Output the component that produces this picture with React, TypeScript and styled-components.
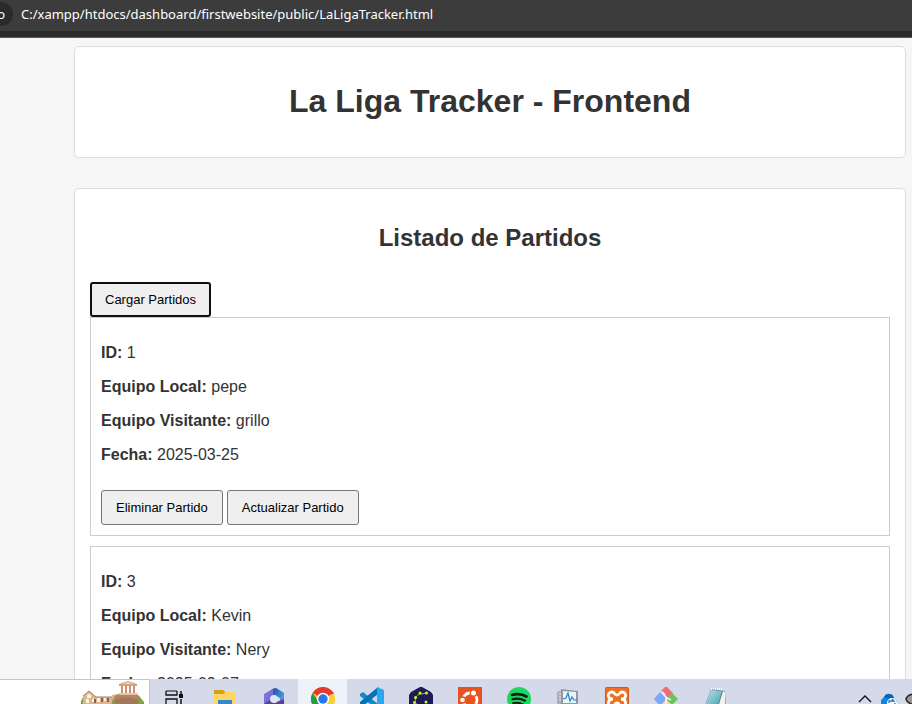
import React from "react";
import styled, { createGlobalStyle } from "styled-components";

const Global = createGlobalStyle`
  * { box-sizing: border-box; }
  body { margin: 0; background: #f6f6f6; color: #333; font-family: "Liberation Sans", Arial, sans-serif; }
  svg { flex: none; }
`;

const Screen = styled.div`
  display: flex;
  flex-direction: column;
  height: 100vh;
  overflow: hidden;
`;

const AddressBar = styled.header`
  flex: none;
  display: flex;
  align-items: flex-start;
  gap: 8px;
  height: 38px;
  padding-top: 2px;
  background: linear-gradient(#3c3c3c 31px, #2b2b2b 31px, #2b2b2b 37px, #5a5a5a 37px);
  color: #fff;
  font-family: "Noto Sans", "Open Sans", sans-serif;
  font-size: 13px;
`;

const SiteChip = styled.button`
  display: flex;
  justify-content: flex-end;
  align-items: center;
  width: 13px;
  height: 24px;
  padding: 0 8px 0 0;
  border: 0;
  border-radius: 0 12px 12px 0;
  background: #2a2a2a;
  color: #fff;
  font: inherit;
`;

const UrlInput = styled.input`
  flex: 1;
  min-width: 0;
  height: 24px;
  padding: 0;
  border: 0;
  outline: 0;
  background: transparent;
  color: #fff;
  font: inherit;
`;

const Viewport = styled.main`
  flex: 1;
  min-height: 0;
  overflow: hidden;
  padding: 8px 6px 0 74px;
`;

const Card = styled.section`
  margin-bottom: 30px;
  padding: 15px;
  border: 1px solid #ddd;
  border-radius: 5px;
  background: #fff;
`;

const Title = styled.h1`
  margin: 21px 0 23px;
  font-size: 32px;
  line-height: 36px;
  text-align: center;
`;

const Subtitle = styled.h2`
  margin: 20px 0 30px;
  font-size: 24px;
  line-height: 28px;
  text-align: center;
`;

const Button = styled.button<{ $focused?: boolean }>`
  display: block;
  height: 35px;
  padding: 0 ${(p) => (p.$focused ? 13 : 14)}px;
  border: ${(p) => (p.$focused ? "2px solid #101010" : "1px solid #767676")};
  border-radius: 3px;
  background: #efefef;
  color: #000;
  font-family: inherit;
  font-size: 13px;
  white-space: nowrap;
`;

const Match = styled.article`
  margin-bottom: 10px;
  padding: 10px;
  border: 1px solid #ccc;
`;

const Field = styled.p`
  margin: 16px 0;
  font-size: 16px;
  line-height: 18px;
`;

const Actions = styled.div`
  display: flex;
  gap: 4px;
  padding-top: 10px;
`;

const Taskbar = styled.footer`
  flex: none;
  display: flex;
  height: 25px;
  overflow: hidden;
  background: #d4daea;
`;

const SearchBox = styled.button`
  display: flex;
  justify-content: flex-end;
  align-items: flex-start;
  width: 150px;
  height: 40px;
  padding: 1px 3px 0 0;
  border: solid #c3c6cd;
  border-width: 1px 1px 0 0;
  background: #fff;
`;

const TaskButton = styled.button<{ $active?: boolean; $wide?: boolean }>`
  flex: none;
  display: flex;
  justify-content: center;
  align-items: flex-start;
  width: ${(p) => (p.$wide ? 50 : 49)}px;
  height: 40px;
  padding: 8px 0 0;
  border: 0;
  background: ${(p) => (p.$active ? "#edf1f9" : "transparent")};
`;

const Tray = styled.div`
  display: flex;
  gap: 8px;
  margin-left: auto;
`;

const TrayButton = styled.button<{ $edge?: boolean }>`
  display: flex;
  align-items: flex-start;
  width: ${(p) => (p.$edge ? 7 : 16)}px;
  height: 40px;
  padding: 13px 0 0;
  border: 0;
  overflow: hidden;
  background: transparent;
`;

const Icon = ({ children }: { children: React.ReactNode }) => (
  <svg width="24" height="24" viewBox="0 0 24 24" aria-hidden="true">{children}</svg>
);

const Acropolis = () => (
  <svg width="66" height="32" viewBox="0 0 66 32" aria-hidden="true">
    <path d="M1 20l2-4 2 2v14H0z" fill="#86a83f" />
    <path d="M3 15l6-5 7 6h16v-2l5-1v19H3z" fill="#dcb592" />
    <path d="M3 15l6-5 7 6h16" fill="none" stroke="#a87e61" strokeWidth="1" />
    <path d="M7 15a2 2 0 0 1 4 0v2H7zM6 18h3v4H6zM12 18h2v3h-2zM17 17h3v4h-3zM24 17h2v3h-2z" fill="#fff3e5" />
    <path d="M14 18h2v4h-2zM21 17h2v4h-2zM27 17h2v4h-2z" fill="#8b6049" />
    <path d="M34 16l4-3 18-1 4 4v16H34z" fill="#b48361" />
    <path d="M39 3l9-3 9 3v2H39z" fill="#d3a17f" />
    <path d="M42 3l6-2 6 2z" fill="#efd2b7" />
    <path d="M41 5h2v8h-2zM45 5h2v8h-2zM49 5h2v8h-2zM53 5h2v8h-2z" fill="#c99473" />
    <path d="M39 12h19v2H39z" fill="#e9c5a5" />
    <path d="M34 20c8-5 19-4 25 0v12H34z" fill="#a3775a" />
    <path d="M33 17l3 8v7h-7zM59 15l5 6v11h-8z" fill="#7fa244" />
  </svg>
);

const TaskViewIcon = () => (
  <Icon>
    <path d="M3 4v4h11V4M3 22V12h11v10" fill="none" stroke="#111" strokeWidth="1.3" />
    <path d="M3 18h11M18 4v3M18 12v8" stroke="#111" strokeWidth="1.5" />
    <path d="M16 7h4v4h-4z" fill="#111" />
    <path d="M3 4h11" stroke="#111" strokeWidth="1" />
  </Icon>
);

const FolderIcon = () => (
  <Icon>
    <path d="M1 3h9l2 2v6H1z" fill="#d99b14" />
    <path d="M1 7h9l3-2h9v17H1z" fill="#ffd563" />
    <path d="M5 13h14v9H5z" fill="#3487d1" />
    <path d="M8 17h8v5H8z" fill="#174b85" />
  </Icon>
);

const OfficeIcon = () => (
  <Icon>
    <defs>
      <linearGradient id="officeLeft" x2="1" y2="1"><stop stopColor="#ae65e0" /><stop offset=".5" stopColor="#6376d7" /><stop offset="1" stopColor="#4a2d91" /></linearGradient>
      <linearGradient id="officeRight" x2="1" y2="1"><stop stopColor="#234ba4" /><stop offset="1" stopColor="#58b8f2" /></linearGradient>
    </defs>
    <path d="M2 7L12 1l3 2v7l-7 5v6l-6-4z" fill="url(#officeLeft)" />
    <path d="M11 2l3-1 8 5v12h-4V11l-7-3z" fill="url(#officeRight)" />
    <path d="M2 17l6-4 4 3 10-4v6l-10 6z" fill="#604096" />
    <circle cx="12" cy="12" r="4" fill="#dfe5f1" />
  </Icon>
);

const ChromeIcon = () => (
  <Icon>
    <circle cx="12" cy="12" r="12" fill="#ffcd32" />
    <path d="M12 12L1.6 6A12 12 0 0 1 22.4 6z" fill="#e53a2e" />
    <path d="M1.6 6A12 12 0 0 0 12 24l5-9-9 0z" fill="#249b49" />
    <path d="M12 6h10.4" stroke="#e53a2e" strokeWidth="2" />
    <circle cx="12" cy="12" r="6.2" fill="#fff" />
    <circle cx="12" cy="12" r="4.7" fill="#2878ec" />
  </Icon>
);

const CodeIcon = () => (
  <Icon>
    <path d="M0 7l3-2 15 12v6L0 9z" fill="#1488cc" />
    <path d="M0 17l3 2 15-12V0L0 15z" fill="#0872b5" />
    <path d="M17 0l7 3v18l-7 3z" fill="#28a9ef" />
  </Icon>
);

const CircuitIcon = () => (
  <Icon>
    <path d="M11 0h2l9 5 2 3v9l-2 3-9 4h-2l-9-4-2-3V8l2-3z" fill="#211956" />
    <path d="M17 6l-4 1H10l-3 3-1 5 3 4h6" fill="none" stroke="#79bf23" strokeWidth="1" />
    <g fill="#b8ff26"><circle cx="17.5" cy="6" r="1.5" /><circle cx="11" cy="6" r="1.5" /><circle cx="6.5" cy="10.5" r="1.5" /><circle cx="5.5" cy="15.5" r="1.5" /><circle cx="11" cy="19" r="1.5" /><circle cx="17" cy="15" r="1.5" /></g>
  </Icon>
);

const UbuntuIcon = () => (
  <Icon>
    <path d="M0 0h24v24H0z" fill="#e65320" />
    <circle cx="12" cy="13" r="7" fill="none" stroke="#fff" strokeWidth="2.8" />
    <g fill="#fff" stroke="#e65320" strokeWidth="1.4"><circle cx="15.5" cy="6" r="3.2" /><circle cx="4.5" cy="13" r="3" /><circle cx="15.5" cy="20" r="3" /></g>
  </Icon>
);

const SpotifyIcon = () => (
  <Icon>
    <circle cx="12" cy="12" r="12" fill="#1ed760" />
    <g fill="none" stroke="#101c14" strokeLinecap="round"><path d="M5 8c5-1.5 10-1 14.5 1.5" strokeWidth="2.6" /><path d="M5.5 12.2c4.5-1.2 8.5-.7 12.5 1.5" strokeWidth="2.2" /><path d="M6 16.2c4-1 7-.5 10.5 1.4" strokeWidth="1.8" /></g>
  </Icon>
);

const MonitorIcon = () => (
  <Icon>
    <path d="M1 5l5-2v16l-5 2z" fill="#aaaeb1" />
    <path d="M5 2l17 2v13L5 19z" fill="#92999e" />
    <path d="M7 4l13 1v11L7 16z" fill="#e4f4fb" />
    <path d="M7 12l3-1 2-5 2 8 2-4 2 3h3" fill="none" stroke="#3384b4" strokeWidth="1.2" />
    <path d="M3 7h2M3 10h2M3 13h2" stroke="#eee" />
  </Icon>
);

const XamppIcon = () => (
  <Icon>
    <rect width="24" height="24" rx="2" fill="#c85c1c" />
    <rect x="1" y="1" width="22" height="22" rx="1" fill="#ed7122" />
    <path d="M8 12C2 12 2 5 7 5c3 0 2 3 5 3s2-3 5-3c5 0 5 7-1 7 6 0 6 8 1 8-3 0-2-4-5-4s-2 4-5 4c-5 0-5-8 1-8z" fill="none" stroke="#fff" strokeWidth="2.8" />
  </Icon>
);

const GitIcon = () => (
  <Icon>
    <path d="M7 4l4-4h2l6 6-5 5-3-3V6z" fill="#f06d75" />
    <path d="M0 12l6-7 6 6-1 3-5 5z" fill="#79a9fc" />
    <path d="M18 6l6 6-6 6-5-5 1-3z" fill="#6cc15f" />
    <path d="M12 13l6 6-6 5-6-5z" fill="#ffdf79" />
    <path d="M8 5l4 5v8M13 11l4 2" fill="none" stroke="#f5f1f4" strokeWidth="1.6" />
  </Icon>
);

const NotepadIcon = () => (
  <Icon>
    <defs><linearGradient id="note" x2="1" y2="1"><stop stopColor="#c4eaf0" /><stop offset="1" stopColor="#3993a7" /></linearGradient></defs>
    <path d="M8 2l14 2 1 20H0z" fill="#637b80" />
    <path d="M8 3l11 1-6 20H0z" fill="url(#note)" />
    <path d="M20 4l2 1v19h-8z" fill="#f1f4ee" />
    <path d="M8 2h12" stroke="#eef8f5" strokeWidth="2" strokeDasharray="1 1" />
  </Icon>
);

const apps = [
  { name: "Explorador de archivos", icon: <FolderIcon /> },
  { name: "Microsoft 365", icon: <OfficeIcon /> },
  { name: "Google Chrome", icon: <ChromeIcon />, active: true },
  { name: "Visual Studio Code", icon: <CodeIcon /> },
  { name: "Circuitos", icon: <CircuitIcon /> },
  { name: "Ubuntu", icon: <UbuntuIcon /> },
  { name: "Spotify", icon: <SpotifyIcon /> },
  { name: "Monitor", icon: <MonitorIcon /> },
  { name: "XAMPP", icon: <XamppIcon /> },
  { name: "Git", icon: <GitIcon /> },
  { name: "Bloc de notas", icon: <NotepadIcon /> },
];

const matches = [
  { id: 1, home: "pepe", away: "grillo", date: "2025-03-25" },
  { id: 3, home: "Kevin", away: "Nery", date: "2025-03-07" },
];

export default function App() {
  return (
    <Screen>
      <Global />
      <AddressBar>
        <SiteChip aria-label="Información del sitio">o</SiteChip>
        <UrlInput
          aria-label="Dirección"
          spellCheck={false}
          defaultValue="C:/xampp/htdocs/dashboard/firstwebsite/public/LaLigaTracker.html"
        />
      </AddressBar>
      <Viewport>
        <Card>
          <Title>La Liga Tracker - Frontend</Title>
        </Card>
        <Card>
          <Subtitle>Listado de Partidos</Subtitle>
          <Button $focused>Cargar Partidos</Button>
          {matches.map((m) => (
            <Match key={m.id}>
              <Field><strong>ID:</strong> {m.id}</Field>
              <Field><strong>Equipo Local:</strong> {m.home}</Field>
              <Field><strong>Equipo Visitante:</strong> {m.away}</Field>
              <Field><strong>Fecha:</strong> {m.date}</Field>
              <Actions>
                <Button>Eliminar Partido</Button>
                <Button>Actualizar Partido</Button>
              </Actions>
            </Match>
          ))}
        </Card>
      </Viewport>
      <Taskbar>
        <SearchBox aria-label="Buscar"><Acropolis /></SearchBox>
        <TaskButton $wide aria-label="Vista de tareas"><TaskViewIcon /></TaskButton>
        {apps.map((a) => (
          <TaskButton key={a.name} $active={a.active} aria-label={a.name}>{a.icon}</TaskButton>
        ))}
        <Tray>
          <TrayButton aria-label="Mostrar iconos ocultos">
            <svg width="16" height="16" viewBox="0 0 16 16" aria-hidden="true"><path d="M2 10l6-6 6 6" fill="none" stroke="#111" strokeWidth="1.4" /></svg>
          </TrayButton>
          <TrayButton aria-label="OneDrive">
            <svg width="16" height="16" viewBox="0 0 16 16" aria-hidden="true">
              <path d="M0 12V8l3-3q2-4 6-3 3 0 4 4l3 3v7H3z" fill="#1683dc" />
              <path d="M3 5q3-5 8-2l2 3-5 1z" fill="#0c62b4" />
              <circle cx="11" cy="11" r="5" fill="#fff" />
              <path d="M8 11V9h5l-2-2M14 11v2H9l2 2" fill="none" stroke="#1475c9" strokeWidth="1.3" />
            </svg>
          </TrayButton>
          <TrayButton $edge aria-label="Estado">
            <svg width="16" height="16" viewBox="0 0 16 16" aria-hidden="true"><path d="M8 2Q2 3 1 7q1 4 8 6" fill="#999" stroke="#222" strokeWidth="1.5" /></svg>
          </TrayButton>
        </Tray>
      </Taskbar>
    </Screen>
  );
}
